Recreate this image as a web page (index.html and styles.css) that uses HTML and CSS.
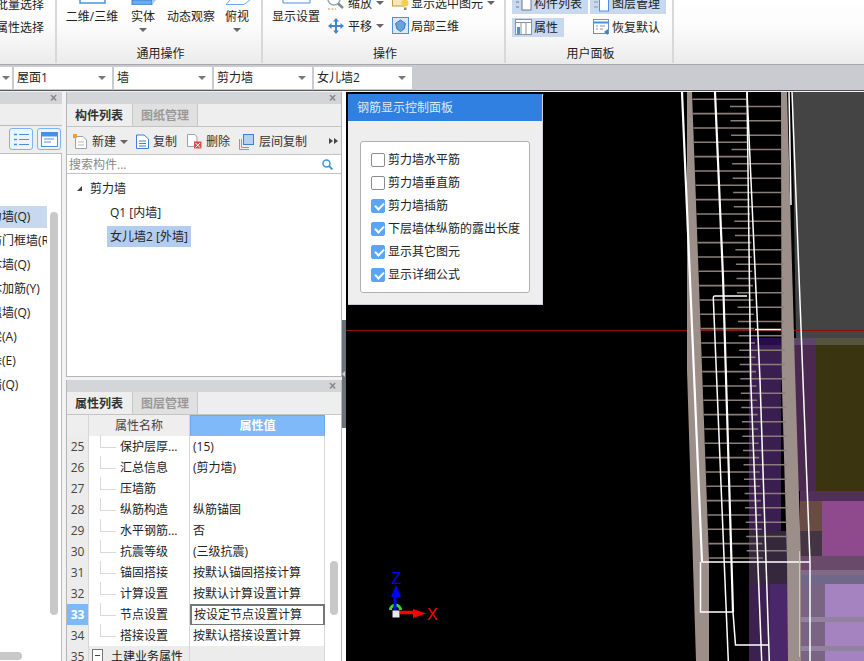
FILE: index.html
```html
<!DOCTYPE html>
<html lang="zh">
<head>
<meta charset="utf-8">
<title>钢筋显示控制面板</title>
<link rel="stylesheet" href="styles.css">
</head>
<body>
<div class="app">
  <header class="ribbon">
    <section class="group g1">
      <div class="tools stack-right">
        <div class="small">批量选择</div>
        <div class="small">按属性选择</div>
      </div>
      <div class="glabel"></div>
    </section>
    <section class="group g2">
      <div class="tools">
        <div class="big w-a"><svg class="bigicon" width="27" height="5"><rect x="1" y="-6" width="25" height="9" fill="#fff" stroke="#4a90e2" stroke-width="1.5"/></svg><span>二维/三维</span></div>
        <div class="big w-b"><svg class="bigicon" width="27" height="5"><path d="M2 0H22V5H2Z" fill="#6ea8ee" stroke="#3f7fd0"/><path d="M22 0H26L22 5Z" fill="#a8c8f0"/></svg><span>实体</span><i class="caret"></i></div>
        <div class="big w-c"><svg class="bigicon" width="27" height="5"></svg><span>动态观察</span></div>
        <div class="big w-d"><svg class="bigicon" width="27" height="5"><path d="M2 4.500H20L26 0M2 4.500L6 0" fill="none" stroke="#6ea8ee"/></svg><span>俯视</span><i class="caret"></i></div>
      </div>
      <div class="glabel">通用操作</div>
    </section>
    <section class="group g3">
      <div class="tools">
        <div class="big w-e"><svg class="bigicon" width="29" height="5"><path d="M1 0V3H28V0" fill="#fff" stroke="#4a90e2"/></svg><span>显示设置</span></div>
        <div class="col col-a">
          <div class="small ico"><svg width="18" height="18" viewBox="0 0 18 18"><circle cx="7" cy="5" r="6" fill="#fff" stroke="#8fa6bd" stroke-width="1.500"/><path d="M11 9.500L16 14" stroke="#7d8a96" stroke-width="2.500"/><path d="M1 15H9" stroke="#e8842a" stroke-dasharray="2 1.500"/></svg><span>缩放</span><i class="caret c-s"></i></div>
          <div class="small ico"><svg width="18" height="18" viewBox="0 0 18 18"><path d="M9 1L12 4.500H10V8H13.500V6L17 9L13.500 12V10H10V13.500H12L9 17L6 13.500H8V10H4.500V12L1 9L4.500 6V8H8V4.500H6Z" fill="#3f86d8"/></svg><span>平移</span><i class="caret c-s"></i></div>
        </div>
        <div class="col col-b">
          <div class="small ico"><svg width="18" height="18" viewBox="0 0 18 18"><rect x="0.500" y="1" width="11" height="11" fill="#f6e6b8" stroke="#c79a3a"/><circle cx="13" cy="9" r="3.500" fill="#f5cf4a"/><path d="M12 13.500H14.500V16H12Z" fill="#888"/></svg><span>显示选中图元</span><i class="caret c-s"></i></div>
          <div class="small ico"><svg width="18" height="18" viewBox="0 0 18 18"><rect x="0.500" y="0.500" width="16" height="16" fill="#d9e7f7" stroke="#4a90e2"/><path d="M8.500 3L13.500 6.500L12 12L8.500 14.500L5 12L3.500 6.500Z" fill="#6aa3dd" stroke="#3c78b8"/></svg><span>局部三维</span></div>
        </div>
      </div>
      <div class="glabel">操作</div>
    </section>
    <section class="group g4">
      <div class="tools users">
        <div class="ubtn on u1"><svg width="17" height="17" viewBox="0 0 17 17"><path d="M1 2H4M1 7H4M1 12H4" stroke="#6c7a88"/><rect x="7" y="1" width="9" height="14" fill="#fff" stroke="#6c7a88"/></svg><span>构件列表</span></div>
        <div class="ubtn on u2"><svg width="17" height="17" viewBox="0 0 17 17"><path d="M1 2H5M1 7H5M1 12H5" stroke="#8a949e"/><rect x="6.500" y="3" width="9" height="13" fill="#fff" stroke="#4a90e2"/></svg><span>图层管理</span></div>
        <div class="ubtn on u3"><svg width="17" height="17" viewBox="0 0 17 17"><rect x="0.500" y="0.500" width="16" height="15" fill="#fff" stroke="#8a949e"/><path d="M0.500 3.500H16.500M6 3.500V15.500M11 3.500V15.500" stroke="#8a949e"/><rect x="2" y="8" width="3" height="7" fill="#4a90e2"/></svg><span>属性</span></div>
        <div class="ubtn u4"><svg width="17" height="17" viewBox="0 0 17 17"><rect x="0.500" y="0.500" width="15" height="14" fill="#fff" stroke="#6f8fb5"/><path d="M0.500 3.500H15.500" stroke="#4a90e2" stroke-width="2"/><path d="M3 7H5M7 7H12M3 10H5M7 10H10" stroke="#8a949e"/><path d="M11 13L15 10V16Z" fill="#3f7fd0"/></svg><span>恢复默认</span></div>
      </div>
      <div class="glabel">用户面板</div>
    </section>
    <section class="group g5"></section>
  </header>

  <nav class="combos">
    <div class="combo c0"><i class="caret"></i></div>
    <div class="combo"><span>屋面1</span><i class="caret"></i></div>
    <div class="combo"><span>墙</span><i class="caret"></i></div>
    <div class="combo"><span>剪力墙</span><i class="caret"></i></div>
    <div class="combo"><span>女儿墙2</span><i class="caret"></i></div>
  </nav>

  <main class="main">
    <aside class="left">
      <div class="ptitle"><b class="close">×</b></div>
      <div class="lstrip"></div>
      <div class="ltool">
        <span class="lbtn"><svg width="17" height="15" viewBox="0 0 17 15"><path d="M1 2.500H4M1 7.500H4M1 12.500H4" stroke="#4a90e2" stroke-width="1.500"/><path d="M6 2.500H16M6 7.500H16M6 12.500H16" stroke="#4a90e2"/></svg></span>
        <span class="lbtn"><svg width="17" height="15" viewBox="0 0 17 15"><rect x="0.500" y="0.500" width="16" height="14" fill="#fff" stroke="#4a90e2"/><rect x="1" y="1" width="15" height="3.500" fill="#4a90e2"/><path d="M3 7H13M3 10H10" stroke="#4a90e2"/></svg></span>
      </div>
      <div class="lbody">
        <ul class="llist">
          <li class="sel">剪力墙(Q)</li>
          <li>人防门框墙(RF)</li>
          <li>砌体墙(Q)</li>
          <li>砌体加筋(Y)</li>
          <li>保温墙(Q)</li>
          <li>暗梁(A)</li>
          <li>墙垛(E)</li>
          <li>幕墙(Q)</li>
        </ul>
        <div class="lscroll"><i></i></div>
        <div class="hscroll"></div>
      </div>
    </aside>

    <div class="mid">
      <section class="panel p1">
        <div class="ptitle"><b class="close">×</b></div>
        <div class="tabs"><span class="tab on">构件列表</span><span class="tab">图纸管理</span></div>
        <div class="mtool">
          <span class="mbtn b-new"><svg width="15" height="15" viewBox="0 0 15 15"><path d="M2.500 2.500H10L13.500 6V14.500H2.500Z" fill="#fff" stroke="#9aa3ab"/><rect x="0" y="0" width="4" height="4" fill="#f0a030"/><path d="M5 8H11M5 11H11" stroke="#b5bcc2"/></svg><span>新建</span><i class="caret c-s"></i></span>
          <span class="mbtn b-copy"><svg width="13" height="15" viewBox="0 0 13 15"><path d="M0.500 1H8L12.500 5V14.500H0.500Z" fill="#fff" stroke="#3f7fd0"/><path d="M3 7H10M3 9.500H10M3 12H10" stroke="#3f7fd0"/></svg><span>复制</span></span>
          <span class="mbtn b-del"><svg width="15" height="15" viewBox="0 0 15 15"><path d="M0.500 0.500H8L10 3V12.500H0.500Z" fill="#fff" stroke="#9aa3ab"/><rect x="7" y="7.500" width="7.500" height="7" fill="#e24a4a"/><path d="M8.500 9L13 13.500M13 9L8.500 13.500" stroke="#fff"/></svg><span>删除</span></span>
          <span class="mbtn b-floor"><svg width="16" height="16" viewBox="0 0 16 16"><rect x="4.500" y="0.500" width="10" height="10" fill="#b3d0f5" stroke="#3f7fd0"/><path d="M0.500 5V15.500H10" fill="none" stroke="#e8842a" stroke-width="1"/><path d="M2.500 5V13.500H10" fill="none" stroke="#e8842a"/></svg><span>层间复制</span></span>
          <span class="more"><i></i><i></i></span>
        </div>
        <div class="search"><span>搜索构件...</span><svg width="11" height="11" viewBox="0 0 11 11"><circle cx="4.500" cy="4.500" r="3.500" fill="none" stroke="#3b97d3" stroke-width="1.500"/><path d="M7 7L10.500 10.500" stroke="#3b97d3" stroke-width="1.800"/></svg></div>
        <div class="tree">
          <div class="tnode n0"><i class="tri"></i>剪力墙</div>
          <div class="tnode n1"><span>Q1 [内墙]</span></div>
          <div class="tnode n1"><span class="sel2">女儿墙2 [外墙]</span></div>
        </div>
      </section>

      <section class="panel p2">
        <div class="ptitle"><b class="close">×</b></div>
        <div class="tabs"><span class="tab on">属性列表</span><span class="tab">图层管理</span></div>
        <div class="gridwrap">
          <div class="grid">
            <div class="row head"><span class="n"></span><span class="k">属性名称</span><span class="v">属性值</span></div>
            <div class="row"><span class="n">25</span><span class="k"><i class="tl"></i>保护层厚...</span><span class="v">(15)</span></div>
            <div class="row"><span class="n">26</span><span class="k"><i class="tl"></i>汇总信息</span><span class="v">(剪力墙)</span></div>
            <div class="row"><span class="n">27</span><span class="k"><i class="tl"></i>压墙筋</span><span class="v"></span></div>
            <div class="row"><span class="n">28</span><span class="k"><i class="tl"></i>纵筋构造</span><span class="v">纵筋锚固</span></div>
            <div class="row"><span class="n">29</span><span class="k"><i class="tl"></i>水平钢筋...</span><span class="v">否</span></div>
            <div class="row"><span class="n">30</span><span class="k"><i class="tl"></i>抗震等级</span><span class="v">(三级抗震)</span></div>
            <div class="row"><span class="n">31</span><span class="k"><i class="tl"></i>锚固搭接</span><span class="v">按默认锚固搭接计算</span></div>
            <div class="row"><span class="n">32</span><span class="k"><i class="tl"></i>计算设置</span><span class="v">按默认计算设置计算</span></div>
            <div class="row active"><span class="n">33</span><span class="k"><i class="tl"></i>节点设置</span><span class="v">按设定节点设置计算</span></div>
            <div class="row"><span class="n">34</span><span class="k"><i class="tl end"></i>搭接设置</span><span class="v">按默认搭接设置计算</span></div>
            <div class="row cat"><span class="n">35</span><span class="k"><i class="minus"></i>土建业务属性</span><span class="v"></span></div>
          </div>
          <div class="gscroll"><i></i></div>
        </div>
      </section>
    </div>

    <div class="split"><i></i></div>

    <div class="canvas">
      <svg class="scene" width="518" height="569" viewBox="346 92 518 569">
        <rect x="346" y="92" width="518" height="569" fill="#000"/>
        <!-- model blocks -->
        <path d="M792 92H864V338H796Z" fill="#444"/>
        <rect x="749" y="345" width="32" height="186" fill="#3a1e50"/>
        <rect x="749" y="338" width="32" height="7" fill="#2a0a50"/>
        <rect x="793" y="338" width="23" height="7" fill="#5c4568"/>
        <rect x="816" y="338" width="48" height="7" fill="#55553f"/>
        <rect x="793" y="345" width="23" height="146" fill="#4a2850"/>
        <rect x="816" y="345" width="48" height="146" fill="#3a3510"/>
        <rect x="800" y="491" width="64" height="10" fill="#50305a"/>
        <rect x="822" y="501" width="42" height="55" fill="#8f4a8e"/>
        <rect x="800" y="501" width="22" height="30" fill="#6a4a44"/>
        <rect x="800" y="531" width="22" height="25" fill="#443444"/>
        <rect x="800" y="556" width="64" height="14" fill="#6a4a6a"/>
        <rect x="800" y="570" width="64" height="5" fill="#806a88"/>
        <rect x="800" y="575" width="64" height="9" fill="#706888"/>
        <rect x="800" y="584" width="25" height="77" fill="#7a6484"/>
        <rect x="825" y="584" width="39" height="77" fill="#a583c0"/>
        <rect x="800" y="617" width="64" height="5" fill="#93829f"/>
        <rect x="800" y="646" width="64" height="5" fill="#93829f"/>
        <rect x="749" y="531" width="40" height="53" fill="#36283c"/>
        <rect x="749" y="584" width="21" height="77" fill="#3c2050"/>
        <rect x="770" y="584" width="20" height="77" fill="#4a2768"/>
        <!-- red axis -->
        <path d="M346 330.500H864" stroke="#8a1010"/>
        <!-- wall bands -->
        <path d="M687 92H692L709 560V661H696L687 370Z" fill="#9c8e88"/>
        <path d="M781 92H787L795 370L801 560V661H788L787 560L781.500 370Z" fill="#9c8e88"/>
        <!-- left rungs -->
        <path class="rung" d="M692.300 99.300H746M692.800 113.600H746.500M693.400 128H747.100M693.900 142.300H747.600M694.400 156.600H748.100M694.900 171H748.600M695.500 185.300H749.200M696 199.600H749.700M696.500 214H750.200M697 228.300H750.700M697.600 242.600H751.300M698.100 257H751.800M698.600 271.300H752.300M699.200 285.600H752.900M699.700 300H753.400M700.200 314.300H753.900M700.700 328.600H754.400M701.300 343H755M701.800 357.300H755.500M702.300 371.600H756M702.900 386H756.600M703.400 400.300H757.100M703.900 414.600H757.600M704.400 429H758.100M705 443.300H758.700M705.500 457.600H759.200M706 472H759.700M706.500 486.300H760.200M707.100 500.600H760.800M707.600 515H761.300M708.100 529.300H761.800M708.700 543.600H762.400M709.200 558H762.900"/>
        <!-- right rungs -->
        <path class="rung" d="M730 106.500H780.700M730.500 120.800H780.900M731.100 135.200H781.200M731.600 149.500H781.400M732.200 163.800H781.700M732.700 178.200H781.900M733.200 192.500H782.100M733.800 206.800H782.400M734.300 221.200H782.600M734.900 235.500H782.900M735.400 249.800H783.100M735.900 264.200H783.300M736.500 278.500H783.600M737 292.800H783.800M737.600 307.200H784.100M738.100 321.500H784.300M738.600 335.800H784.500M739.200 350.200H784.800M739.700 364.500H785M740.300 378.800H785.300M740.800 393.200H785.500M741.300 407.500H785.700M741.900 421.800H786M742.400 436.200H786.200M743 450.500H786.500M743.500 464.800H786.700M744 479.200H786.900M744.600 493.500H787.200M745.100 507.800H787.400M745.700 522.200H787.700M746.200 536.500H787.900M746.700 550.800H788.100"/>
        <!-- white reinforcement -->
        <g class="wire thick">
          <path d="M682 92L702 562"/>
          <path d="M715 92L723 277L733 612"/>
        </g>
        <g class="wire">
          <path d="M700.500 562V612H733L735.500 645H768.500"/>
          <path d="M747 296H714.500Q713.300 296 713.300 298L716.700 380L728.300 661"/>
          <path d="M747 92L750.700 380L761.700 661"/>
          <path d="M747 92L760 380L769.300 661"/>
          <path d="M789 92L791 205"/>
          <path d="M792 92L803 380L810 562V661"/>
          <path d="M755 329.500H781M701.500 562H810"/>
          <path d="M799.500 551V657" class="thin"/>
        </g>
        <!-- axis triad -->
        <path d="M390.500 610A5 5 0 0 1 400.500 610" fill="none" stroke="#2ee02e" stroke-width="3"/>
        <path d="M395 597V611" stroke="#0000ff" stroke-width="3"/>
        <path d="M391 597H401L396 585Z" fill="#0000ff"/>
        <path d="M400 612.500H414" stroke="#ff0000" stroke-width="3.500"/>
        <path d="M413 609V618L426 613.500Z" fill="#ff0000"/>
        <rect x="392.500" y="610.500" width="7" height="7" fill="#e8e8e8"/>
        <text class="ax z" x="391.500" y="584">Z</text>
        <text class="ax x" x="427" y="620">X</text>
      </svg>

      <section class="rebar">
        <h2 class="rtitle">钢筋显示控制面板</h2>
        <div class="rbody">
          <div class="rbox">
            <label class="ck"><i class="cb"></i>剪力墙水平筋</label>
            <label class="ck"><i class="cb"></i>剪力墙垂直筋</label>
            <label class="ck"><i class="cb on"></i>剪力墙插筋</label>
            <label class="ck"><i class="cb on"></i>下层墙体纵筋的露出长度</label>
            <label class="ck"><i class="cb on"></i>显示其它图元</label>
            <label class="ck"><i class="cb on"></i>显示详细公式</label>
          </div>
        </div>
      </section>
    </div>
  </main>
</div>
</body>
</html>
```
FILE: styles.css
```css
* { box-sizing: border-box; }
html, body { margin: 0; padding: 0; height: 100%; overflow: hidden; }
body { font: 12px/17px "Open Sans", "Noto Sans CJK SC", sans-serif; color: #222; background: #f2f2f2; }
ul { list-style: none; margin: 0; padding: 0; }
h2 { margin: 0; font-weight: 400; font-size: 12px; }
i { font-style: normal; }
svg { display: block; flex: none; }

.app { width: 864px; height: 661px; display: flex; flex-direction: column; overflow: hidden; }

/* ribbon */
.ribbon { height: 65px; flex: none; display: flex; overflow: hidden; background: linear-gradient(#fff 0%, #fbfbfb 45%, #ebebeb 100%); border-bottom: 1px solid #a6a8ac; }
.group { display: flex; flex-direction: column; justify-content: space-between; border-right: 2px solid #d6d8da; height: 63px; flex: none; }
.g1 { width: 57px; }
.g2 { width: 206px; }
.g3 { width: 243px; }
.g4 { width: 168px; }
.g5 { flex: 1; border: 0; }
.tools { display: flex; height: 46px; }
.glabel { height: 17px; text-align: center; line-height: 17px; color: #222; margin-bottom: 1px; padding-left: 3px; }

.stack-right { flex-direction: column; align-items: flex-end; padding-right: 11px; margin-top: -4px; gap: 6px; white-space: nowrap; }
.small { height: 17px; white-space: nowrap; }

.big { display: flex; flex-direction: column; align-items: center; white-space: nowrap; }
.big span { margin-top: 3px; }
.bigicon { margin-bottom: 0; }
.big .caret { margin-top: 3px; }
.w-a { width: 64px; margin-left: 3px; }
.w-b { width: 48px; margin-left: -5px; }
.w-c { width: 48px; margin-left: 0; }
.w-d { width: 36px; margin-left: 4px; }
.w-e { width: 48px; margin-left: 9px; margin-right: 7px; }

.col { display: flex; flex-direction: column; gap: 5px; margin-top: -6px; }
.col-a { width: 65px; }
.ico { display: flex; align-items: center; gap: 3px; height: 18px; }
.ico .caret { margin-left: 1px; }
.col-b .ico { gap: 1px; }
.col-b .ico .caret { margin-left: 3px; }

.caret { display: block; width: 0; height: 0; border: 4px solid transparent; border-top: 4px solid #666; border-bottom: 0; flex: none; }

.users { display: grid; grid-template-columns: 76px 76px; grid-template-rows: 21px 19px; column-gap: 2px; row-gap: 4px; padding-left: 6px; margin-top: -7px; }
.ubtn { display: flex; align-items: center; gap: 2px; padding-left: 3px; white-space: nowrap; }
.ubtn.on { background: #c7d8ef; }
.u3 { width: 52px; }

/* combos */
.combos { height: 26px; flex: none; display: flex; gap: 2px; padding: 2px 0 0; background: #c9cbd0; border-bottom: 1px solid #555; margin-left: 0; }
.combo { width: 98px; height: 22px; background: #fff; display: flex; align-items: center; justify-content: space-between; padding: 0 6px 0 3px; line-height: 22px; }
.c0 { width: 12px; padding: 0; justify-content: flex-end; }
.c0 .caret { margin-right: 2px; }
.combo .caret { border-top-color: #777; }

/* main */
.main { flex: 1; display: flex; min-height: 0; padding-top: 0; background: #f2f2f2; }
.ptitle { height: 12px; background: #d4d5d9; display: flex; justify-content: flex-end; align-items: center; padding-right: 5px; flex: none; }
.close { font-size: 12px; line-height: 12px; color: #888; font-weight: 700; font-family: "Liberation Sans", sans-serif; }

.left { width: 62px; flex: none; display: flex; flex-direction: column; margin-right: 4px; padding-top: 1px; }
.lstrip { height: 22px; background: #eee; border-bottom: 1px solid #bcbcbc; flex: none; }
.ltool { height: 28px; flex: none; background: #eee; border-bottom: 1px solid #bcbcbc; display: flex; gap: 4px; padding: 2px 0 0 9px; }
.lbtn { width: 24px; height: 22px; border: 1px solid #7fb3ee; border-radius: 3px; background: #eef4fc; display: flex; align-items: center; justify-content: center; }
.lbody { flex: 1; background: #fff; position: relative; display: flex; border-right: 1px solid #bcbcbc; overflow: hidden; }
.llist { width: 47px; padding-top: 52px; overflow: hidden; flex: none; }
.llist li { height: 24px; line-height: 22px; margin-left: -22px; padding-left: 0; white-space: nowrap; }
.llist li.sel { background: #c7d8ef; height: 21.500px; margin-bottom: 2.500px; }
.lscroll { flex: none; width: 14px; padding: 58px 0 0 3px; }
.lscroll i { display: block; width: 8px; height: 403px; background: #c8c8c8; border-radius: 4px; }
.hscroll { position: absolute; left: -6px; bottom: 1px; width: 28px; height: 8px; background: #c8c8c8; border-radius: 4px; }

.mid { width: 276px; flex: none; display: flex; flex-direction: column; gap: 3px; padding-top: 1px; }
.panel { display: flex; flex-direction: column; background: #eee; border-left: 1px solid #b5b5b5; border-right: 1px solid #b5b5b5; }
.p1 { height: 285px; border-bottom: 1px solid #b5b5b5; }
.p2 { flex: 1; min-height: 0; overflow: hidden; }
.tabs { height: 23px; flex: none; display: flex; gap: 4px; border-bottom: 1px solid #c4c4c4; padding-left: 0; }
.tab { padding: 3px 0 0 8px; height: 22px; background: #e0e0e0; color: #999; font-weight: 700; border-right: 1px solid #c8c8c8; border-left: 1px solid #c8c8c8; width: 66px; white-space: nowrap; }
.tab.on { background: #eee; color: #333; border: 0; width: 61px; }
.mtool { height: 28px; flex: none; display: flex; align-items: center; border-bottom: 1px solid #c4c4c4; position: relative; padding: 2px 0 0 6px; color: #333; }
.mbtn { display: flex; align-items: center; gap: 4px; white-space: nowrap; }
.b-new { width: 63px; }
.b-new .caret { margin-left: 0; }
.b-copy { width: 51px; }
.b-del { width: 52px; }
.more { position: absolute; right: 3px; top: 11px; display: flex; gap: 1px; }
.more i { display: block; width: 0; height: 0; border: 3px solid transparent; border-left: 4px solid #444; border-right: 0; }
.search { height: 19px; flex: none; background: #fff; border-bottom: 1px solid #c4c4c4; display: flex; justify-content: space-between; align-items: center; padding: 0 8px 0 2px; color: #888; }
.tree { flex: 1; background: #fff; padding-top: 2px; }
.tnode { height: 24px; line-height: 21px; white-space: nowrap; display: flex; align-items: center; }
.n0 { padding-left: 10px; height: 24px; }
.tri { width: 0; height: 0; border-left: 5px solid transparent; border-bottom: 5px solid #444; margin-right: 8px; }
.n1 { padding-left: 40px; height: 24px; }
.n1 span { padding: 0 3px; height: 21px; display: block; }
.sel2 { background: #b3cdf0; }

.gridwrap { flex: 1; display: flex; min-height: 0; background: #fff; }
.grid { width: 258px; flex: none; }
.row { display: grid; grid-template-columns: 22px 101px 135px; height: 21px; line-height: 21px; white-space: nowrap; }
.row span { border-bottom: 1px solid #d6d6d6; border-right: 1px solid #d6d6d6; display: block; }
.n { background: #ececec; text-align: center; color: #444; }
.k { padding-left: 31px; position: relative; background: #fff; }
.v { padding-left: 3px; background: #fff; }
.tl { position: absolute; left: 11px; top: -1px; bottom: 9px; width: 16px; border-left: 1px solid #d9d9d9; border-bottom: 1px solid #d9d9d9; }
.head .k { padding: 0; text-align: center; background: #eee; color: #444; }
.head .v { padding: 0; text-align: center; background: #80b9f9; color: #fff; font-weight: 700; border: 1px solid #6ea9ec; line-height: 19px; }
.head .n { background: #eee; }
.active .n { background: #7db8f8; color: #fff; font-weight: 700; }
.active .v { border: 2px solid #777; padding-left: 2px; line-height: 18px; }
.cat span { background: #ececec; }
.cat .k { padding-left: 22px; }
.minus { position: absolute; left: 3px; top: 3px; width: 11px; height: 13px; border: 1px solid #777; background: #fff; }
.minus::after { content: ""; position: absolute; left: 2px; right: 2px; top: 5px; height: 1px; background: #444; }
.gscroll { flex: 1; padding: 146px 0 0 5px; }
.gscroll i { display: block; width: 8px; height: 54px; background: #c8c8c8; border-radius: 4px; }

.split { width: 4px; flex: none; background: #fff; padding-top: 229px; }
.split i { display: block; height: 108px; background: #6c727a; position: relative; }
.split i::after { content: ""; position: absolute; left: 0; top: 51px; border: 3px solid transparent; border-right: 3px solid #ccd0d4; border-left: 0; }

.canvas { width: 518px; flex: none; position: relative; margin-top: 1px; overflow: hidden; background: #000; }
.scene { display: block; }
.rung { fill: none; stroke: #8a7d78; stroke-width: 1.600; }
.wire path { fill: none; stroke: #fff; stroke-width: 1.500; }
.wire.thick path { stroke-width: 2.200; }
.wire path.thin { stroke: #c8c4c0; stroke-width: 1; }
.ax { font: 16px "Liberation Sans", sans-serif; }
.ax.z { fill: #0000ff; }
.ax.x { fill: #ff0000; }

.rebar { position: absolute; left: 2px; top: 2px; width: 195px; height: 211px; background: #eee; border-bottom: 1px solid #c8ccd4; border-right: 1px solid #d0d3da; display: flex; flex-direction: column; }
.rtitle { height: 27px; line-height: 28px; background: #2f80e0; color: #dfeafa; padding-left: 9px; flex: none; }
.rbody { padding: 20px 12px 0; }
.rbox { height: 152px; background: #fff; border: 1px solid #b0b0b0; border-radius: 3px; padding: 6px 0 0 10px; display: flex; flex-direction: column; }
.ck { height: 23px; display: flex; align-items: center; gap: 3px; white-space: nowrap; color: #222; }
.cb { width: 14px; height: 14px; border: 1px solid #8c8c8c; border-radius: 2px; background: #fff; flex: none; position: relative; }
.cb.on { background: #5aa5f5; border-color: #5aa5f5; }
.cb.on::after { content: ""; position: absolute; left: 3px; top: 1.500px; width: 7px; height: 4px; border-left: 2px solid #fff; border-bottom: 2px solid #fff; transform: rotate(-45deg) translate(-1px, 1px); }
```
